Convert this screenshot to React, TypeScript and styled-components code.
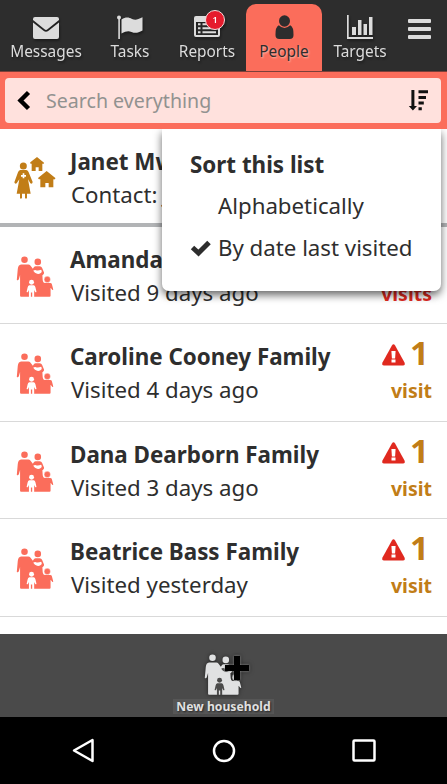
import React from "react";
import styled, { createGlobalStyle, css } from "styled-components";

const coral = "#fb6d5b";
const ink = "#2d2d2d";
const gold = "#c17d17";
const red = "#e0291f";

const GlobalStyle = createGlobalStyle`
  * { box-sizing: border-box; }
  body { margin: 0; font-family: "Noto Sans", "Open Sans", sans-serif; color: #2e2e2e; background: #fff; }
  svg { display: block; flex: none; overflow: visible; }
`;

const Screen = styled.div`
  width: 447px;
  height: 784px;
  display: flex;
  flex-direction: column;
  overflow: hidden;
  background: #fff;
`;

const NavBar = styled.nav`
  height: 72px;
  flex: none;
  display: grid;
  grid-template-columns: 92px 76px 78px 76px 76px 42px;
  padding-top: 4px;
  background: ${ink};
  border-bottom: 1px solid #7c4039;
`;

const Tab = styled.div<{ $active?: boolean }>`
  display: flex;
  flex-direction: column;
  align-items: center;
  padding-top: 11px;
  border-radius: 10px 10px 0 0;
  background: ${(p) => (p.$active ? coral : "transparent")};
  color: ${(p) => (p.$active ? ink : "#dcdcdc")};
  filter: ${(p) => (p.$active ? "none" : "drop-shadow(1px 2px 1px rgba(0,0,0,.35))")};
`;

const TabIcon = styled.div`
  height: 25px;
  position: relative;
`;

const TabLabel = styled.span<{ $glow?: boolean }>`
  font-size: 15.4px;
  line-height: 24px;
  white-space: nowrap;
  ${(p) => p.$glow && css`text-shadow: 1px 1px 2px rgba(255, 205, 190, 0.8);`}
`;

const Badge = styled.span`
  position: absolute;
  left: 11px;
  top: -5px;
  width: 20px;
  height: 20px;
  border: 1px solid #f6dcdc;
  border-radius: 50%;
  background: #e51b2c;
  color: #fff;
  font-size: 9px;
  font-weight: 600;
  line-height: 18px;
  text-align: center;
`;

const MenuButton = styled.div`
  display: flex;
  flex-direction: column;
  gap: 4px;
  padding: 15px 0 0 10px;
`;

const MenuLine = styled.i`
  width: 23px;
  height: 4px;
  border-radius: 1px;
  background: #dcdcdc;
`;

const SearchBar = styled.div`
  height: 57px;
  flex: none;
  padding: 6px 6px 6px 5px;
  background: ${coral};
`;

const SearchField = styled.div`
  height: 45px;
  display: flex;
  align-items: center;
  padding: 0 12px 0 12px;
  border-radius: 4px;
  background: #ffe1dd;
`;

const Placeholder = styled.span`
  flex: 1;
  padding-left: 16px;
  color: #929290;
  font-size: 19.6px;
  line-height: 28px;
`;

const Content = styled.main`
  position: relative;
  height: 505px;
  flex: none;
`;

const Row = styled.section<{ $lead?: boolean }>`
  height: 97.6px;
  display: flex;
  align-items: flex-start;
  padding: 15px 15px 0 14px;
  border-bottom: ${(p) => (p.$lead ? "4px solid #b2b4b6" : "1px solid #d9d9d9")};
`;

const RowIcon = styled.div<{ $lead?: boolean }>`
  width: 56px;
  padding: ${(p) => (p.$lead ? "13px 0 0 0" : "14px 0 0 2px")};
`;

const RowText = styled.div`
  flex: 1;
  white-space: nowrap;
`;

const Name = styled.div`
  font-size: 22.4px;
  line-height: 36px;
  font-weight: 700;
`;

const Detail = styled.div`
  font-size: 22.25px;
  line-height: 30px;
  padding-left: 1px;
`;

const Visits = styled.div<{ $late?: boolean }>`
  display: flex;
  flex-direction: column;
  align-items: flex-end;
  color: ${(p) => (p.$late ? red : gold)};
  font-weight: 700;
`;

const Count = styled.div`
  height: 34px;
  display: flex;
  align-items: center;
  gap: 5px;
  padding-right: 3px;
  font-size: 33px;
  line-height: 28px;
`;

const CountNumber = styled.span`
  margin-top: -6px;
`;

const Unit = styled.div`
  font-size: 19.5px;
  line-height: 36px;
`;

const SortMenu = styled.div`
  position: absolute;
  left: 162px;
  top: 0;
  width: 279px;
  height: 162px;
  padding: 19px 0 0 28px;
  border-radius: 0 0 7px 7px;
  background: #fff;
  box-shadow: 0 4px 8px rgba(0, 0, 0, 0.6);
  clip-path: inset(0 -16px -20px -16px);
  white-space: nowrap;
`;

const SortTitle = styled.div`
  height: 32px;
  font-size: 22.4px;
  line-height: 34px;
  font-weight: 700;
`;

const SortOption = styled.div`
  height: 42px;
  display: grid;
  grid-template-columns: 28px 1fr;
  align-items: center;
  padding-top: 10px;
  font-size: 22.25px;
  line-height: 32px;
`;

const ActionBar = styled.footer`
  height: 83px;
  flex: none;
  display: flex;
  flex-direction: column;
  align-items: center;
  padding-top: 20px;
  background: #4a4a4a;
  color: #e0e0e0;
`;

const HouseholdIcon = styled.div`
  position: relative;
  width: 40px;
  height: 42px;
  filter: drop-shadow(0 0 2px rgba(0, 0, 0, 0.55));
`;

const PlusMark = styled.svg`
  position: absolute;
  left: 21px;
  top: 2px;
  filter: drop-shadow(0 0 1px #999);
`;

const ActionLabel = styled.span`
  margin-top: 3px;
  padding: 0 3px;
  background: #565656;
  font-size: 12.2px;
  line-height: 15px;
  font-weight: 700;
  text-shadow: 1px 1px 2px #222;
`;

const SystemBar = styled.div`
  height: 67px;
  flex: none;
  display: flex;
  justify-content: space-between;
  align-items: center;
  padding: 0 71px 0 72px;
  background: #000;
`;

const EnvelopeIcon = () => (
  <svg width="26" height="24" viewBox="0 0 26 24">
    <path fill="currentColor" d="M2 2h22q2 0 2 2v1L14.500 14.300q-1.500 1.200-3 0L0 5V4Q0 2 2 2zM0 7.500l10.500 8.300q2.500 1.800 5 0L26 7.500V22q0 2-2 2H2q-2 0-2-2z" />
  </svg>
);

const FlagIcon = () => (
  <svg width="26" height="25" viewBox="0 0 26 25" fill="currentColor">
    <circle cx="2" cy="2.500" r="2" />
    <path d="M1.300 3h1.600v21H1.300zM4.500 4.500C9 1.500 12 2.500 15 3.900c3 1.300 5 1.300 10.500-1.600v13.200c-5 2.900-7.500 2.800-11 1.500-3-1.200-5.500-.9-10 1.600z" />
  </svg>
);

const ReportsIcon = () => (
  <svg width="26" height="24" viewBox="0 0 26 24">
    <path
      fill="currentColor"
      fillRule="evenodd"
      d="M2 1h22q2 0 2 2v17q0 2-2 2H2q-2 0-2-2V3q0-2 2-2zM2 7v13h22V7zM4 8.300h2.500v2H4zm4.500 0H22v2H8.500zM4 12.300h2.500v2H4zm4.500 0H22v2H8.500zM4 16.300h2.500v2H4zm4.500 0H22v2H8.500z"
    />
  </svg>
);

const PersonIcon = () => (
  <svg width="19" height="25" viewBox="0 0 20 25" preserveAspectRatio="none" fill="currentColor">
    <circle cx="10" cy="6" r="5.800" />
    <path d="M4 10.300q6 5.400 12 0 3.700 1.700 3.500 9.700 0 4-4 4h-11q-4 0-4-4-.200-8 3.500-9.700z" />
  </svg>
);

const ChartIcon = () => (
  <svg width="26" height="24" viewBox="0 0 26 24" fill="currentColor">
    <path d="M0 0h1.700v22H26v2H0zM5 12h4v8H5zm6-7h3.500v15H11zm5.500 4h3.500v11h-3.500zM22 2h3.500v18H22z" />
  </svg>
);

const SortIcon = () => (
  <svg width="20" height="21" viewBox="0 0 20 21" fill="#111">
    <path d="M2.400 0h3v16H8L3.900 20.500-.2 16h2.600zM9.500.3H19v3H9.500zm0 5.700H17v3H9.500zm0 5.600h5.300v3H9.500zm0 5.700h3.300v3H9.500z" />
  </svg>
);

const FamilyIcon = ({ color, gap }: { color: string; gap: string }) => (
  <svg width="37" height="41" viewBox="49 53 112 125" fill={color}>
    <circle cx="74.500" cy="64.500" r="10" />
    <circle cx="115" cy="71" r="10" />
    <path d="M64 79h22q4 0 7 4l7 9 3-5q2-3 6-3h12q5 0 7 5l6 14q1 4-3 7l-2 2 1 15q1 8 6 8h17q4 0 5 4l4 15q0 4-3 2l-5-6v24q0 3-3 3H64q-3 0-3-3v-63l-4 14q-3 3-6 1l3-33q1-13 10-14z" />
    <circle cx="144" cy="124.500" r="9.500" stroke={gap} strokeWidth="1" />
    <path fill={gap} d="M101 98q5-4 11-1 6 1 13-2 4 4 1 8-5 6-13 4-7-2-12-9z" />
    <circle cx="96" cy="133" r="7.500" fill={gap} />
    <path fill={gap} d="M89 142h14q4 1 5 7l3 13q-1 3-4 1l-3-6v21h-6v-14h-4v14h-6v-21l-3 6q-3 2-4-1l3-13q1-6 5-7z" />
  </svg>
);

const HealthWorkerIcon = () => (
  <svg width="42" height="42" viewBox="42 80 124 126" fill={gold}>
    <circle cx="69" cy="107" r="10.500" />
    <path d="M60 119h18q5 1 7 7l12 29q-1 7-7 4l-7-12 8 43H80v13q-3 4-6 0v-13h-9v13q-4 4-6 0v-13H49l8-43-8 12q-5 4-7-3l11-30q2-6 7-7z" />
    <path d="M110 80l21 17q2 4-5 3v22h-11v-11h-9v11H94v-22q-7 1-4-4zM139 122l26 21q1 5-6 4v24h-14v-13h-10v13h-15v-24q-8 0-6-5z" />
    <path fill="#fff" d="M67 129h5v5h5v5h-5v5h-5v-5h-5v-5h5z" />
  </svg>
);

const WarningIcon = () => (
  <svg width="23" height="24" viewBox="0 0 23 24">
    <path fill={red} d="M9.900 1.400q1.600-2.500 3.200 0l9.400 17q1.100 3-1.500 3H2q-2.600 0-1.500-3z" />
    <path fill="#fff" d="M9.400 7h4.200l-.5 7.400H9.900zM9.500 15.500h4v3h-4z" />
  </svg>
);

const families = [
  { name: "Amanda Allen Family", detail: "Visited 9 days ago", count: 2, unit: "visits", late: true },
  { name: "Caroline Cooney Family", detail: "Visited 4 days ago", count: 1, unit: "visit" },
  { name: "Dana Dearborn Family", detail: "Visited 3 days ago", count: 1, unit: "visit" },
  { name: "Beatrice Bass Family", detail: "Visited yesterday", count: 1, unit: "visit" },
];

export default function App() {
  return (
    <Screen>
      <GlobalStyle />
      <NavBar>
        <Tab><TabIcon><EnvelopeIcon /></TabIcon><TabLabel>Messages</TabLabel></Tab>
        <Tab><TabIcon><FlagIcon /></TabIcon><TabLabel>Tasks</TabLabel></Tab>
        <Tab><TabIcon><ReportsIcon /><Badge>1</Badge></TabIcon><TabLabel>Reports</TabLabel></Tab>
        <Tab $active><TabIcon><PersonIcon /></TabIcon><TabLabel $glow>People</TabLabel></Tab>
        <Tab><TabIcon><ChartIcon /></TabIcon><TabLabel>Targets</TabLabel></Tab>
        <MenuButton><MenuLine /><MenuLine /><MenuLine /></MenuButton>
      </NavBar>
      <SearchBar>
        <SearchField>
          <svg width="13" height="20" viewBox="0 0 13 20">
            <path d="M11.500 1.500L3.500 9.500l8 8" fill="none" stroke="#000" strokeWidth="4.400" />
          </svg>
          <Placeholder>Search everything</Placeholder>
          <SortIcon />
        </SearchField>
      </SearchBar>
      <Content>
        <Row $lead>
          <RowIcon $lead><HealthWorkerIcon /></RowIcon>
          <RowText><Name>Janet Mwangi</Name><Detail>Contact: Janet</Detail></RowText>
        </Row>
        {families.map((f) => (
          <Row key={f.name}>
            <RowIcon><FamilyIcon color={coral} gap="#fff" /></RowIcon>
            <RowText><Name>{f.name}</Name><Detail>{f.detail}</Detail></RowText>
            <Visits $late={f.late}>
              <Count><WarningIcon /><CountNumber>{f.count}</CountNumber></Count>
              <Unit>{f.unit}</Unit>
            </Visits>
          </Row>
        ))}
        <SortMenu>
          <SortTitle>Sort this list</SortTitle>
          <SortOption><span /><span>Alphabetically</span></SortOption>
          <SortOption>
            <svg width="21" height="16" viewBox="0 0 21 16">
              <path d="M2.500 7.500l6 5.500L19 2.500" fill="none" stroke={ink} strokeWidth="5" />
            </svg>
            <span>By date last visited</span>
          </SortOption>
        </SortMenu>
      </Content>
      <ActionBar>
        <HouseholdIcon>
          <FamilyIcon color="#e0e1e2" gap="#4a4a4a" />
          <PlusMark width="24" height="24" viewBox="0 0 24 24">
            <path d="M9 0h6v9h9v6h-9v9H9v-9H0V9h9z" fill="#000" />
          </PlusMark>
        </HouseholdIcon>
        <ActionLabel>New household</ActionLabel>
      </ActionBar>
      <SystemBar>
        <svg width="23" height="25" viewBox="0 0 23 25"><path d="M2 12.500L20.500 2v21z" fill="none" stroke="#fff" strokeWidth="2.500" strokeLinejoin="round" /></svg>
        <svg width="24" height="24" viewBox="0 0 24 24"><circle cx="12" cy="12" r="10" fill="none" stroke="#fff" strokeWidth="2.500" /></svg>
        <svg width="24" height="24" viewBox="0 0 24 24"><rect x="1.500" y="1.500" width="21" height="20" rx="1" fill="none" stroke="#fff" strokeWidth="2.500" /></svg>
      </SystemBar>
    </Screen>
  );
}
